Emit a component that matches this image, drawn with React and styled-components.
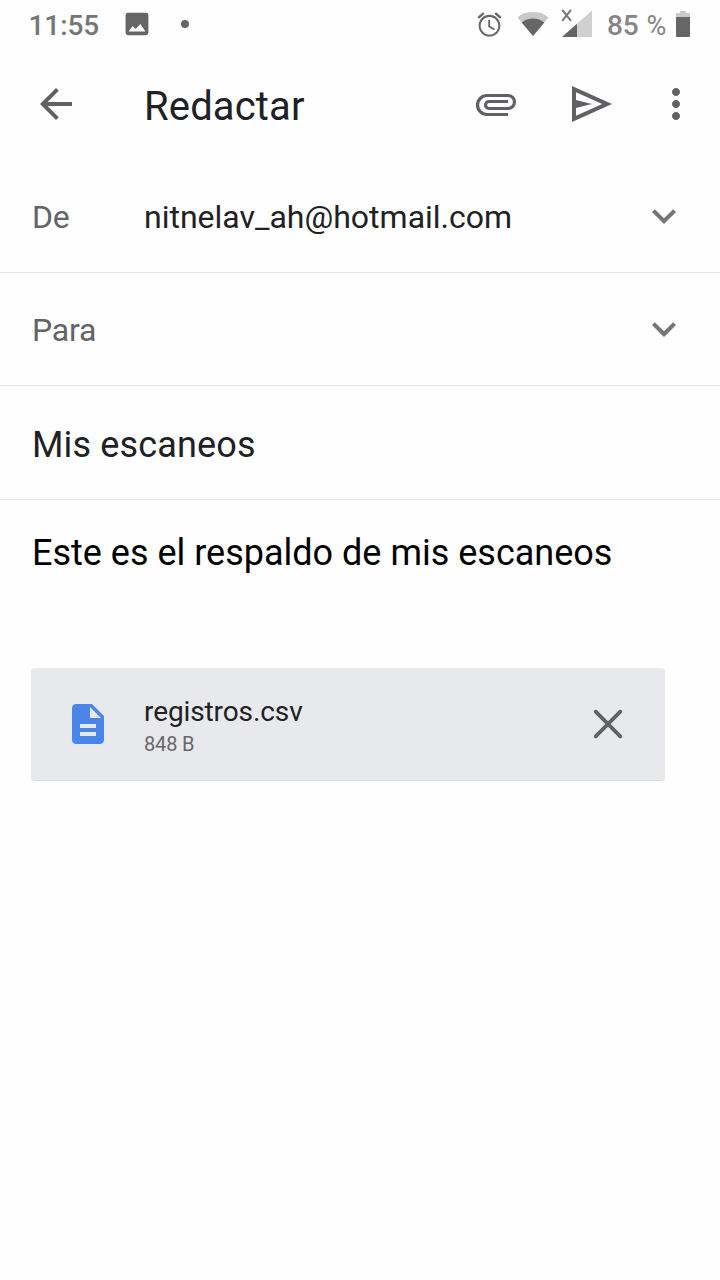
import React from 'react';
import styled, { createGlobalStyle } from 'styled-components';

const GlobalStyle = createGlobalStyle`
  * { box-sizing: border-box; }
  body { margin: 0; background: #fefefe; font-family: Roboto, "Noto Sans", sans-serif; }
  svg { display: block; flex: none; }
  button { border: 0; padding: 0; background: none; color: inherit; font: inherit; }
`;

const Screen = styled.main`
  width: 720px;
  height: 1280px;
  display: flex;
  flex-direction: column;
  overflow: hidden;
  background: #fefefe;
`;

const StatusBar = styled.div`
  height: 48px;
  display: flex;
  align-items: center;
  justify-content: space-between;
  padding: 0 29px 0 28.5px;
`;

const StatusGroup = styled.div`
  display: flex;
  align-items: center;
`;

const Clock = styled.span`
  width: 70.5px;
  padding-top: 4px;
  font-size: 28px;
  line-height: 32px;
  font-weight: 500;
  letter-spacing: -0.1px;
  color: #757575;
`;

const BatteryLevel = styled.span`
  width: 82.5px;
  display: flex;
  gap: 8px;
  padding: 4px 0 0 14.5px;
  font-size: 28px;
  line-height: 32px;
  font-weight: 500;
  letter-spacing: -0.2px;
  color: #858585;
`;

const PercentSign = styled.span`
  font-size: 27px;
  font-weight: 400;
`;

const NotificationDot = styled.span`
  width: 8px;
  height: 8px;
  margin-left: 32px;
  border-radius: 50%;
  background: #666;
`;

const StatusIcon = styled.svg`
  margin-left: ${(p) => p.$gap || 0}px;
`;

const Toolbar = styled.header`
  height: 112px;
  display: flex;
  align-items: center;
  padding: 0 20px 0 32px;
  color: #606165;
`;

const Title = styled.h1`
  flex: 1;
  margin: 0;
  padding: 6px 0 0 64px;
  font-size: 40px;
  line-height: 48px;
  font-weight: 400;
  letter-spacing: 0.15px;
  color: #202124;
`;

const Actions = styled.div`
  display: flex;
  gap: 48px;

  & > :last-child { margin-left: -12px; }
`;

const IconButton = styled.button`
  display: flex;
  width: 48px;
  height: 48px;
  color: ${(p) => p.$color || 'inherit'};
`;

const FieldRow = styled.div`
  height: ${(p) => p.$height || 113}px;
  display: flex;
  align-items: center;
  padding: 0 32px;
  border-bottom: 1px solid #e6e7e8;
`;

const FieldLabel = styled.span`
  width: 112px;
  padding-top: 1px;
  font-size: 32px;
  line-height: 38px;
  letter-spacing: -0.2px;
  color: #636467;
`;

const FieldValue = styled.span`
  flex: 1;
  padding-top: 1px;
  font-size: 32px;
  line-height: 38px;
  color: #202124;
`;

const Subject = styled.span`
  padding-top: 4px;
  font-size: 36px;
  line-height: 42px;
  letter-spacing: 0.15px;
  color: #202124;
`;

const Body = styled.p`
  margin: 0;
  padding: 32px 32px 0;
  height: 168px;
  font-size: 36px;
  line-height: 42px;
  color: #000;
`;

const Attachment = styled.div`
  width: 634px;
  height: 112px;
  margin-left: 31px;
  padding: 0 33px;
  display: flex;
  align-items: center;
  border-radius: 4px;
  background: #e8e9ed;
  box-shadow: 0 1px 1px #dadce0;
`;

const FileInfo = styled.div`
  flex: 1;
  display: flex;
  flex-direction: column;
  padding: 2px 0 0 32px;
`;

const FileName = styled.span`
  font-size: 28px;
  line-height: 34px;
  letter-spacing: -0.1px;
  color: #202124;
`;

const FileSize = styled.span`
  font-size: 20px;
  line-height: 24px;
  margin-top: 3px;
  letter-spacing: -0.15px;
  color: #66686b;
`;

function Icon({ d, fill = 'currentColor' }) {
  return (
    <svg width="48" height="48" viewBox="0 0 24 24" fill={fill} aria-hidden="true">
      <path fillRule="evenodd" d={d} />
    </svg>
  );
}

function LineIcon({ d, weight, cap = 'butt' }) {
  return (
    <svg width="48" height="48" viewBox="0 0 24 24" fill="none" aria-hidden="true">
      <path d={d} stroke="currentColor" strokeWidth={weight} strokeLinecap={cap} />
    </svg>
  );
}

const icons = {
  back: 'M20 11H7.83l5.59-5.59L12 4l-8 8 8 8 1.41-1.41L7.83 13H20v-2z',
  attach:
    'M18 17.25H7.5a4.75 4.75 0 0 1 0-9.5H18a3.25 3.25 0 0 1 0 6.5H8.5a1.75 1.75 0 0 1 0-3.5H18',
  send: 'M2 3l20 9-20 9V3zm2 3.1V10l8 2-8 2v3.9L17.1 12 4 6.1z',
  more:
    'M12 8c1.1 0 2-.9 2-2s-.9-2-2-2-2 .9-2 2 .9 2 2 2zm0 2c-1.1 0-2 .9-2 2s.9 2 2 2 2-.9 2-2-.9-2-2-2zm0 6c-1.1 0-2 .9-2 2s.9 2 2 2 2-.9 2-2-.9-2-2-2z',
  expand: 'M16.59 8.59L12 13.17 7.41 8.59 6 10l6 6 6-6z',
  close: 'M5.85 5.85l12.3 12.3M18.15 5.85l-12.3 12.3',
  file:
    'M14 2H6c-1.1 0-1.99.9-1.99 2L4 20c0 1.1.89 2 1.99 2H18c1.1 0 2-.9 2-2V8l-6-6zm2 16H8v-2h8v2zm0-4H8v-2h8v2zm-3-5V3.5L18.5 9H13z',
};

export default function App() {
  return (
    <Screen>
      <GlobalStyle />
      <StatusBar>
        <StatusGroup>
          <Clock>11:55</Clock>
          <StatusIcon $gap={26} width="24" height="24" viewBox="0 0 24 24">
            <path
              fill="#666"
              fillRule="evenodd"
              d="M3 .8h18a2.4 2.4 0 0 1 2.4 2.4v17.6a2.4 2.4 0 0 1-2.4 2.4H3a2.4 2.4 0 0 1-2.4-2.4V3.2A2.4 2.4 0 0 1 3 .8zM3.6 19.4h16.8L15.4 12l-4.8 5-2.9-3z"
            />
          </StatusIcon>
          <NotificationDot />
        </StatusGroup>
        <StatusGroup>
          <StatusIcon width="29" height="29" viewBox="0 0 24 24">
            <path
              fill="#666"
              d="M22 5.72l-4.6-3.86-1.29 1.53 4.6 3.86L22 5.72zM7.88 3.39L6.6 1.86 2 5.71l1.29 1.53 4.59-3.85zM12.5 8H11v6l4.75 2.85.75-1.23-4-2.37V8zM12 4c-4.97 0-9 4.03-9 9s4.02 9 9 9c4.97 0 9-4.03 9-9s-4.03-9-9-9zm0 16.3c-4.03 0-7.3-3.27-7.3-7.3S7.97 5.7 12 5.7s7.3 3.27 7.3 7.3-3.27 7.3-7.3 7.3z"
            />
          </StatusIcon>
          <StatusIcon $gap={13} width="32" height="24" viewBox="0 0 32 24">
            <path fill="#c9c9c9" d="M.5 5.5C9-1.8 23-1.8 31.5 5.5L16 24z" />
            <path fill="#666" d="M4.7 10.5C11 5 21 5 27.3 10.5L16 24z" />
          </StatusIcon>
          <StatusIcon $gap={12} width="32" height="30" viewBox="0 0 32 30">
            <path fill="#d0d0d0" d="M31 1.5V28H1z" />
            <path fill="#666" d="M16 14.75V28H1z" />
            <path stroke="#777" strokeWidth="2" d="M1.2 .8l8.800 11M10 .8l-8.800 11" />
          </StatusIcon>
          <BatteryLevel>
            85 <PercentSign>%</PercentSign>
          </BatteryLevel>
          <StatusIcon width="16" height="28" viewBox="0 0 16 28">
            <path fill="#c9c9c9" d="M5 1h6v2h4v6H1V3h4z" />
            <path fill="#666" d="M1 7h14v19a1 1 0 0 1-1 1H2a1 1 0 0 1-1-1z" />
          </StatusIcon>
        </StatusGroup>
      </StatusBar>

      <Toolbar>
        <IconButton aria-label="Atrás"><Icon d={icons.back} /></IconButton>
        <Title>Redactar</Title>
        <Actions>
          <IconButton aria-label="Adjuntar"><LineIcon d={icons.attach} weight={1.6} /></IconButton>
          <IconButton aria-label="Enviar"><Icon d={icons.send} /></IconButton>
          <IconButton aria-label="Más opciones"><Icon d={icons.more} /></IconButton>
        </Actions>
      </Toolbar>

      <FieldRow>
        <FieldLabel>De</FieldLabel>
        <FieldValue>nitnelav_ah@hotmail.com</FieldValue>
        <IconButton $color="#757575" aria-label="Cambiar cuenta"><Icon d={icons.expand} /></IconButton>
      </FieldRow>
      <FieldRow>
        <FieldLabel>Para</FieldLabel>
        <FieldValue />
        <IconButton $color="#757575" aria-label="Mostrar Cc y Cco"><Icon d={icons.expand} /></IconButton>
      </FieldRow>
      <FieldRow $height={114}>
        <Subject>Mis escaneos</Subject>
      </FieldRow>
      <Body>Este es el respaldo de mis escaneos</Body>

      <Attachment>
        <Icon d={icons.file} fill="#4a86e8" />
        <FileInfo>
          <FileName>registros.csv</FileName>
          <FileSize>848 B</FileSize>
        </FileInfo>
        <IconButton $color="#5f6163" aria-label="Quitar archivo">
          <LineIcon d={icons.close} weight={1.9} cap="round" />
        </IconButton>
      </Attachment>
    </Screen>
  );
}
